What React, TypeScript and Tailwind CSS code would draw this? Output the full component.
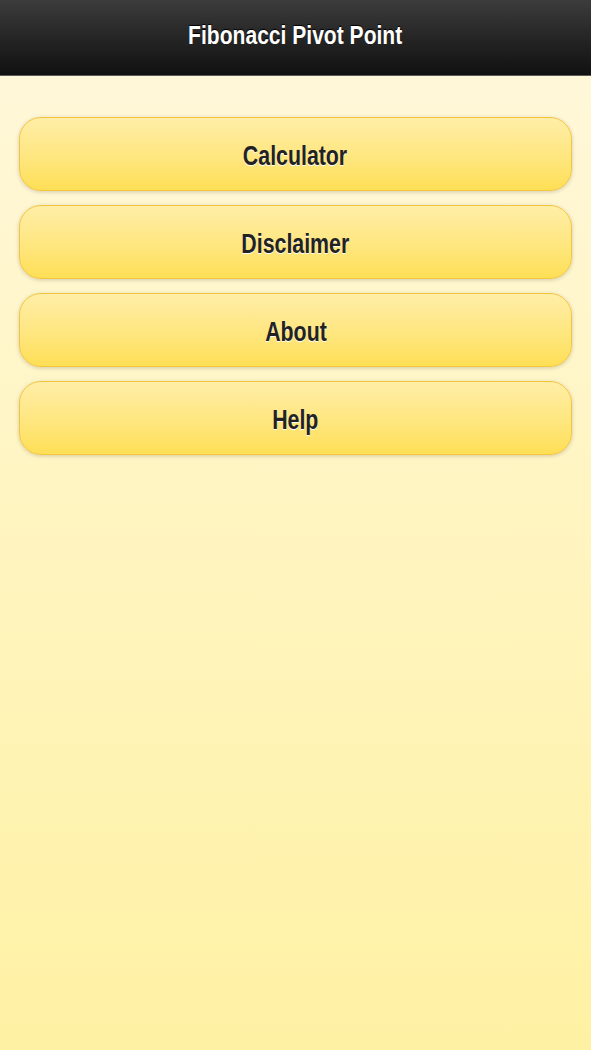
const ITEMS = ["Calculator", "Disclaimer", "About", "Help"];

const App = () => {
  return (
    <div
      className="min-h-[1050px] flex flex-col bg-gradient-to-b from-[#fff8dc] to-[#fff1a3]"
      style={{ fontFamily: '"Liberation Sans", Arial, sans-serif' }}
    >
      {/* Header */}
      <div className="h-[76px] flex items-center justify-center bg-gradient-to-b from-[#3c3c3c] to-[#111111] border-b border-[#5a5a5a]">
        <h1 className="inline-block scale-x-[0.81] text-[26px] font-bold text-white [text-shadow:0_-1px_1px_#000] -mt-[4px]">
          Fibonacci Pivot Point
        </h1>
      </div>

      {/* Menu */}
      <div className="flex flex-col gap-[14px] pt-[41px] px-[19px]">
        {ITEMS.map((item) => (
          <button
            key={item}
            className="h-[74px] w-full rounded-[22px] border border-[#f4c63f] bg-gradient-to-b from-[#ffeea6] to-[#fedf55] shadow-[0_1px_4px_rgba(0,0,0,0.18)] text-[27px] font-bold text-[#222] [text-shadow:0_1px_0_#fff]"
          >
            <span className="inline-block scale-x-[0.79] mt-[4px]">{item}</span>
          </button>
        ))}
      </div>
    </div>
  );
};

export default App;
